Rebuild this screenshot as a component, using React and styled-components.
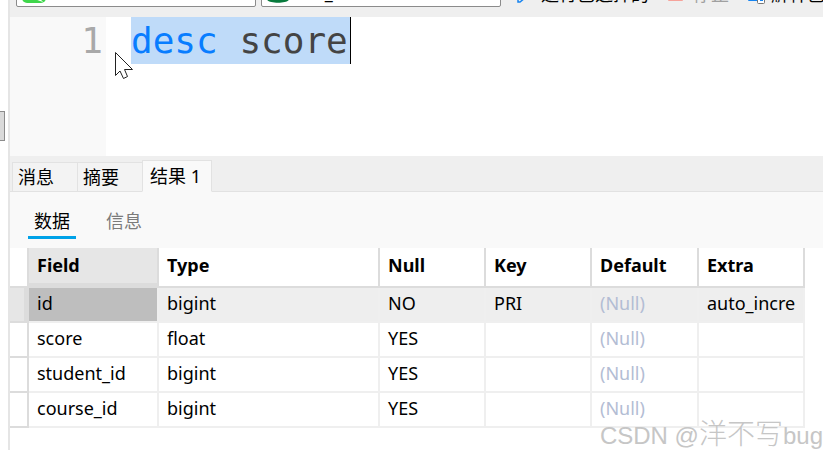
import React, { useState } from "react";
import styled, { createGlobalStyle } from "styled-components";

const GlobalStyle = createGlobalStyle`
  * {
    box-sizing: border-box;
  }

  body {
    margin: 0;
    background: #fff;
    color: #000;
    font-family: "Noto Sans", "Noto Sans CJK SC", sans-serif;
    font-size: 18px;
    overflow: hidden;
  }

  button, select {
    font: inherit;
    color: inherit;
  }
`;

const Window = styled.div`
  position: relative;
  display: flex;
  min-height: 100vh;
`;

const Splitter = styled.div`
  flex: none;
  width: 10px;
  padding-top: 111px;
  border-right: 2px solid #e5e5e5;
`;

const Grip = styled.div`
  width: 5px;
  height: 30px;
  background: #dadada;
  border: 1px solid #8c8c8c;
  border-left: none;
`;

const Main = styled.main`
  flex: 1;
  min-width: 0;
  display: flex;
  flex-direction: column;
`;

const Toolbar = styled.div`
  display: flex;
  align-items: flex-end;
  height: 17px;
  padding: 0 0 10px 6px;
  background: #efefef;
  overflow: hidden;
`;

const Picker = styled.label`
  flex: none;
  display: flex;
  align-items: center;
  width: 240px;
  height: 30px;
  margin-right: 5px;
  padding-left: 5px;
  background: #fff;
  border: 1px solid #8b8b8b;
  border-radius: 2px;

  svg {
    flex: none;
  }

  select {
    flex: 1;
    appearance: none;
    border: none;
    background: none;
    padding: 0 4px;
    outline: none;
  }
`;

const ToolButton = styled.button`
  flex: none;
  display: flex;
  align-items: center;
  gap: 6px;
  height: 28px;
  margin-left: 10px;
  padding: 0;
  border: none;
  background: none;
  color: ${(props) => (props.disabled ? "#a0a0a0" : "#000")};
  white-space: nowrap;
`;

const Editor = styled.div`
  display: flex;
  height: 139px;
  font-family: "DejaVu Sans Mono", monospace;
  font-size: 36px;
  line-height: 47px;
`;

const Gutter = styled.div`
  width: 96px;
  padding-right: 3px;
  background: #f9f9f9;
  color: #a9a9a9;
  text-align: right;
`;

const Code = styled.div`
  flex: 1;
  padding-left: 25px;
  color: #444;
  white-space: pre;
  outline: none;
`;

const Selected = styled.span`
  display: inline-block;
  height: 47px;
  padding-right: 2px;
  background: #bfdbf9;
  border-right: 1px solid #000;
`;

const Keyword = styled.span`
  color: #087dff;
`;

const TabStrip = styled.div`
  display: flex;
  align-items: flex-end;
  height: 36px;
  padding-left: 2px;
  background: #efefef;
  box-shadow: inset 0 -1px #e2e2e2;
`;

const Tab = styled.button`
  width: ${(props) => (props.$active ? "70px" : "65px")};
  height: ${(props) => (props.$active ? "32px" : "30px")};
  padding: 0 0 0 ${(props) => (props.$active ? "7px" : "5px")};
  border: 1px solid #e2e2e2;
  border-right-width: ${(props) => (props.$active ? "1px" : "0")};
  border-bottom-color: ${(props) => (props.$active ? "#f9f9f9" : "#e2e2e2")};
  background: ${(props) => (props.$active ? "#f9f9f9" : "#f3f3f3")};
  line-height: 28px;
  text-align: left;
  white-space: nowrap;
`;

const SubTabs = styled.div`
  display: flex;
  align-items: flex-start;
  gap: 24px;
  height: 56px;
  padding: 13px 18px 0;
  background: #f9f9f9;
`;

const SubTab = styled.button`
  height: 34px;
  padding: 0 6px;
  border: none;
  border-bottom: 3px solid ${(props) => (props.$active ? "#00a2e8" : "transparent")};
  background: none;
  color: ${(props) => (props.$active ? "#000" : "#7b7b7b")};
  line-height: 32px;
`;

const Grid = styled.table`
  width: 795px;
  table-layout: fixed;
  border-collapse: separate;
  border-spacing: 0;
`;

const HeadCell = styled.th`
  height: 40px;
  padding: 0 0 4px 8px;
  border-right: 2px solid #dcdcdc;
  border-bottom: 2px solid #dcdcdc;
  background: ${(props) => (props.$active ? "#e6e6e6" : "#fff")};
  box-shadow: ${(props) => (props.$active ? "inset 0 -3px #dcdcdc" : "none")};
  font-weight: 700;
  line-height: 24px;
  text-align: left;
`;

const Row = styled.tr`
  background: ${(props) => (props.$active ? "#eee" : "#fff")};
`;

const Marker = styled.td`
  padding: 0;
  border-right: ${(props) => (props.$active ? "5px" : "2px")} solid #dcdcdc;
  border-bottom: 2px solid #dcdcdc;
  background: ${(props) => (props.$active ? "#e6e6e6" : "#fff")};
`;

const Cell = styled.td`
  height: 35px;
  padding: 0 0 4px 8px;
  border-right: 2px solid #efefef;
  border-bottom: 2px solid #efefef;
  background: ${(props) => (props.$selected ? "#bebebe" : "transparent")};
  background-clip: padding-box;
  color: ${(props) => (props.$empty ? "#b3bdd4" : "#000")};
  line-height: 24px;
  white-space: nowrap;
`;

const Pointer = styled.svg`
  position: absolute;
  left: 114px;
  top: 51px;
`;

const Watermark = styled.div`
  position: absolute;
  right: 0;
  bottom: 0;
  color: #c6c6c6;
  font-family: "Liberation Sans", "Noto Sans CJK SC", sans-serif;
  font-size: 24px;
  line-height: 28px;
  white-space: nowrap;

  span {
    font-size: 28px;
    font-weight: 300;
  }
`;

const columns = [
  { name: "Field", width: 130 },
  { name: "Type", width: 221 },
  { name: "Null", width: 106 },
  { name: "Key", width: 106 },
  { name: "Default", width: 107 },
  { name: "Extra", width: 106 },
];

const rows = [
  ["id", "bigint", "NO", "PRI", null, "auto_incre"],
  ["score", "float", "YES", "", null, ""],
  ["student_id", "bigint", "YES", "", null, ""],
  ["course_id", "bigint", "YES", "", null, ""],
];

const tabs = ["消息", "摘要", "结果 1"];
const subTabs = ["数据", "信息"];

const App = () => {
  const [tab, setTab] = useState(2);
  const [subTab, setSubTab] = useState(0);

  return (
    <Window>
      <GlobalStyle />
      <Splitter>
        <Grip />
      </Splitter>
      <Main>
        <Toolbar>
          <Picker>
            <svg width="24" height="22" viewBox="0 0 24 22">
              <rect width="24" height="22" rx="5" fill="#3fd64b" />
              <path d="M12 16c3 2 6 1 9 5l-3-1c-2-1-5-1-6-4z" fill="#fff" />
            </svg>
            <select aria-label="连接">
              <option>localhost</option>
            </select>
          </Picker>
          <Picker>
            <svg width="22" height="22" viewBox="0 0 22 22">
              <path d="M0 4v14c0 5 22 5 22 0V4z" fill="#087a3d" />
              <ellipse cx="11" cy="4" rx="11" ry="4" fill="#36a96a" />
            </svg>
            <select aria-label="数据库">
              <option>test_db</option>
            </select>
          </Picker>
          <ToolButton>
            <svg width="19" height="20" viewBox="0 0 19 20">
              <path d="M2 1v18h2L15 10z" fill="none" stroke="#1684f0" strokeWidth="1.500" />
            </svg>
            运行已选择的
          </ToolButton>
          <ToolButton disabled>
            <svg width="28" height="18" viewBox="0 0 28 18">
              <rect x="9" y="1" width="15" height="16" rx="1" fill="#f6a39b" />
            </svg>
            停止
          </ToolButton>
          <ToolButton>
            <svg width="26" height="24" viewBox="0 0 26 24" fill="none">
              <path d="M19 19.500H9.500V3.500H24.500V14" stroke="#1684f0" />
              <rect x="18.500" y="13.500" width="7" height="9" rx="1" fill="#fff" stroke="#777" />
              <path d="M21 19.500h3" stroke="#1684f0" />
            </svg>
            解释已选择的
          </ToolButton>
        </Toolbar>

        <Editor>
          <Gutter>1</Gutter>
          <Code role="textbox" aria-label="SQL" contentEditable suppressContentEditableWarning spellCheck={false}>
            <Selected>
              <Keyword>desc</Keyword> score
            </Selected>
          </Code>
        </Editor>

        <TabStrip role="tablist">
          {tabs.map((label, i) => (
            <Tab key={label} role="tab" aria-selected={i === tab} $active={i === tab} onClick={() => setTab(i)}>
              {label}
            </Tab>
          ))}
        </TabStrip>
        <SubTabs role="tablist">
          {subTabs.map((label, i) => (
            <SubTab key={label} role="tab" aria-selected={i === subTab} $active={i === subTab} onClick={() => setSubTab(i)}>
              {label}
            </SubTab>
          ))}
        </SubTabs>

        <Grid>
          <colgroup>
            <col width={19} />
            {columns.map((col) => (
              <col key={col.name} width={col.width} />
            ))}
          </colgroup>
          <thead>
            <tr>
              <HeadCell />
              {columns.map((col, i) => (
                <HeadCell key={col.name} scope="col" $active={i === 0}>
                  {col.name}
                </HeadCell>
              ))}
            </tr>
          </thead>
          <tbody>
            {rows.map((row, r) => (
              <Row key={row[0]} $active={r === 0}>
                <Marker $active={r === 0} />
                {row.map((value, c) => (
                  <Cell key={columns[c].name} $selected={r === 0 && c === 0} $empty={value === null}>
                    {value === null ? "(Null)" : value}
                  </Cell>
                ))}
              </Row>
            ))}
          </tbody>
        </Grid>
      </Main>

      <Pointer width="20" height="29" viewBox="0 0 20 29">
        <path
          d="M1.500 1.500V24.500L6 20L9.500 27.500L13.500 25.500L10.500 18.500H18.500Z"
          fill="#fff"
          stroke="#222"
        />
      </Pointer>
      <Watermark>
        CSDN @<span>洋不写</span>bug
      </Watermark>
    </Window>
  );
};

export default App;
